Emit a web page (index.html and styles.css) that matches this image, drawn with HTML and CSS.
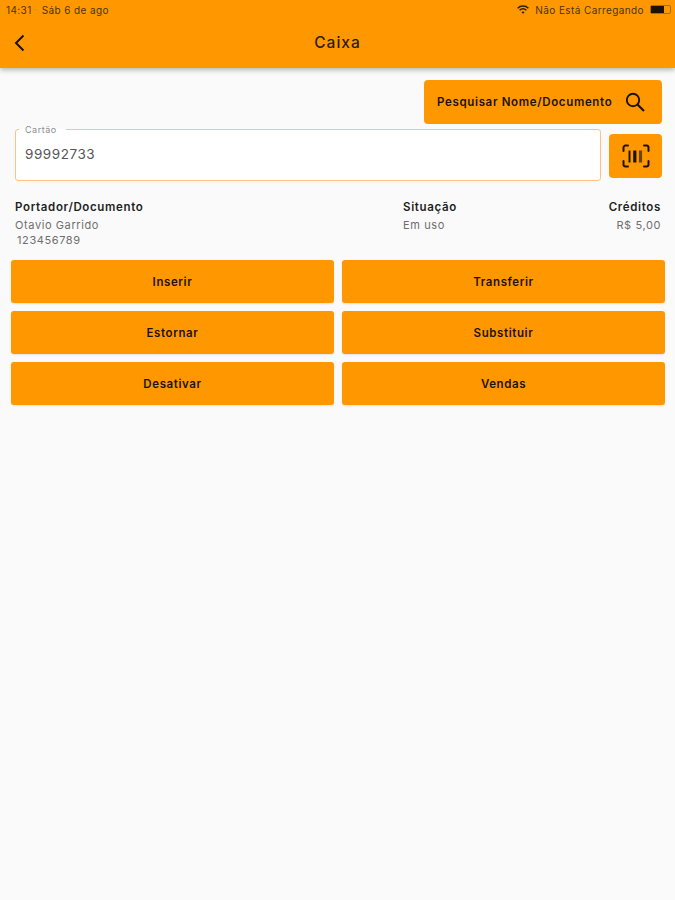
FILE: index.html
```html
<!DOCTYPE html>
<html lang="pt-BR">
<head>
<meta charset="utf-8">
<title>Caixa</title>
<link rel="stylesheet" href="styles.css">
</head>
<body>
<header class="appbar">
  <div class="statusbar">
    <span class="status-left"><span>14:31</span><span>Sáb 6 de ago</span></span>
    <span class="status-right">
      <svg class="wifi" width="12" height="9" viewBox="0 0 12 9" fill="none" stroke="#2e2006" stroke-width="1.5"><path d="M.6 3.2c3-2.9 7.8-2.9 10.8 0"/><path d="M2.6 5.2c1.9-1.8 4.9-1.8 6.8 0"/><path d="M6 8.8 4.3 7c1-.8 2.4-.8 3.4 0z" fill="#2e2006" stroke="none"/></svg>
      <span>Não Está Carregando</span>
      <span class="battery"><span class="battery-fill"></span></span>
    </span>
  </div>
  <div class="toolbar">
    <button class="back" aria-label="Voltar">
      <svg width="12" height="18" viewBox="0 0 12 18"><path d="M10.5 1.5 3 9l7.5 7.5" fill="none" stroke="#1c1304" stroke-width="2"/></svg>
    </button>
    <h1 class="title">Caixa</h1>
  </div>
</header>
<main class="content">
  <div class="search-row">
    <button class="search-btn">
      <span>Pesquisar Nome/Documento</span>
      <svg width="22" height="22" viewBox="0 0 22 22"><circle cx="9" cy="9" r="6.2" fill="none" stroke="#1c1304" stroke-width="1.9"/><path d="m13.5 13.5 6.5 6.5" stroke="#1c1304" stroke-width="2.2"/></svg>
    </button>
  </div>
  <div class="card-row">
    <fieldset class="card-field">
      <legend class="card-label">Cartão</legend>
      <div class="card-value">99992733</div>
    </fieldset>
    <button class="scan-btn" aria-label="Ler código">
      <svg width="28" height="24" viewBox="0 0 28 24" fill="none" stroke="#1c1304" stroke-width="2" stroke-linecap="round">
        <path d="M6 1.5H3.5a2 2 0 0 0-2 2V7"/><path d="M22 1.5h2.5a2 2 0 0 1 2 2V7"/><path d="M6 22.5H3.5a2 2 0 0 1-2-2V17"/><path d="M22 22.5h2.5a2 2 0 0 0 2-2V17"/>
        <g stroke-linecap="butt"><path d="M7.5 6.5v12"/><path d="M12.8 6.5v12" stroke-width="3.2"/><path d="M18.5 6.5v12" stroke-width="3.2" stroke="#6b4405"/></g>
      </svg>
    </button>
  </div>
  <section class="info">
    <div class="info-col info-holder">
      <div class="info-head">Portador/Documento</div>
      <div class="info-text">Otavio Garrido</div>
      <div class="info-text info-doc">123456789</div>
    </div>
    <div class="info-col info-state">
      <div class="info-head">Situação</div>
      <div class="info-text">Em uso</div>
    </div>
    <div class="info-col info-credit">
      <div class="info-head">Créditos</div>
      <div class="info-text">R$ 5,00</div>
    </div>
  </section>
  <section class="actions">
    <button class="action">Inserir</button>
    <button class="action">Transferir</button>
    <button class="action">Estornar</button>
    <button class="action">Substituir</button>
    <button class="action">Desativar</button>
    <button class="action">Vendas</button>
  </section>
</main>
</body>
</html>
```
FILE: styles.css
```css
* { box-sizing: border-box; }
html, body { margin: 0; height: 100%; }
body {
  background: #fafafa;
  font-family: Inter, Roboto, "Liberation Sans", sans-serif;
  color: #1f1f1f;
  overflow: hidden;
}
button {
  font-family: inherit;
  border: 0;
  cursor: pointer;
  color: #1c1304;
  background: #ff9800;
}
.appbar {
  height: 68px;
  background: #ff9800;
  box-shadow: 0 2px 5px rgba(0, 0, 0, .28);
}
.statusbar {
  height: 19px;
  padding: 0 4px 0 6px;
  display: flex;
  justify-content: space-between;
  align-items: center;
  font-size: 10px;
  letter-spacing: .4px;
  color: #4a3508;
}
.status-left { display: flex; gap: 10px; }
.status-right { display: flex; align-items: center; gap: 6px; }
.battery {
  width: 21px;
  height: 9px;
  border: 1px solid #a86c0a;
  border-radius: 2px;
  margin-left: 0;
  display: flex;
}
.battery-fill { width: 13px; background: #1c1304; }
.toolbar {
  height: 49px;
  position: relative;
  display: flex;
  align-items: center;
  justify-content: center;
  padding-bottom: 2px;
}
.back {
  position: absolute;
  left: 13px;
  top: 15px;
  padding: 0;
  height: 18px;
  background: none;
}
.title {
  margin: 0;
  font-size: 15.5px;
  font-weight: 500;
  letter-spacing: 1px;
  color: #2a1c05;
}
.content { padding: 12px 10px 0 11px; }
.search-row { display: flex; justify-content: flex-end; padding-right: 3px; }
.search-btn {
  width: 238px;
  height: 44px;
  border-radius: 4px;
  display: flex;
  align-items: center;
  justify-content: space-between;
  padding: 0 16px 0 13px;
  font-size: 11.5px;
  font-weight: 600;
  letter-spacing: .66px;
}
.card-row {
  display: flex;
  gap: 8px;
  padding: 0 3px 0 4px;
  margin-top: 5px;
  align-items: flex-start;
}
.card-field {
  flex: 1;
  height: 52px;
  margin: 0;
  padding: 0 0 0 3px;
  background: #fff;
  border: 1px solid #ffc08a;
  border-radius: 3px;
  min-width: 0;
}
.card-label {
  padding: 0 9px 0 6px;
  font-size: 9px;
  letter-spacing: .5px;
  color: #8c8c8c;
  line-height: 1;
  height: 0;
  transform: translateY(-5px);
}
.card-value {
  margin: 16px 0 0 6px;
  font-size: 13.5px;
  letter-spacing: .55px;
  color: #555;
}
.scan-btn {
  width: 53px;
  height: 44px;
  margin-top: 5px;
  border-radius: 4px;
  display: flex;
  align-items: center;
  justify-content: center;
  padding: 0;
}
.info {
  display: flex;
  margin-top: 18px;
  padding: 0 4px;
  font-size: 11px;
  line-height: 15px;
}
.info-col { flex: none; }
.info-holder { width: 388px; }
.info-state { flex: 1; }
.info-credit { text-align: right; }
.info-head {
  font-size: 11.5px;
  font-weight: 600;
  letter-spacing: .65px;
  line-height: 16px;
  margin-bottom: 3px;
  color: #1f1f1f;
}
.info-text { color: #6e6e6e; letter-spacing: .6px; }
.info-doc { padding-left: 2px; }
.actions {
  display: grid;
  grid-template-columns: 323px 323px;
  gap: 8px;
  margin-top: 12px;
}
.action {
  height: 43px;
  border-radius: 3px;
  font-size: 11.5px;
  font-weight: 600;
  letter-spacing: .6px;
  box-shadow: 0 1px 2px rgba(0, 0, 0, .1);
}
```
